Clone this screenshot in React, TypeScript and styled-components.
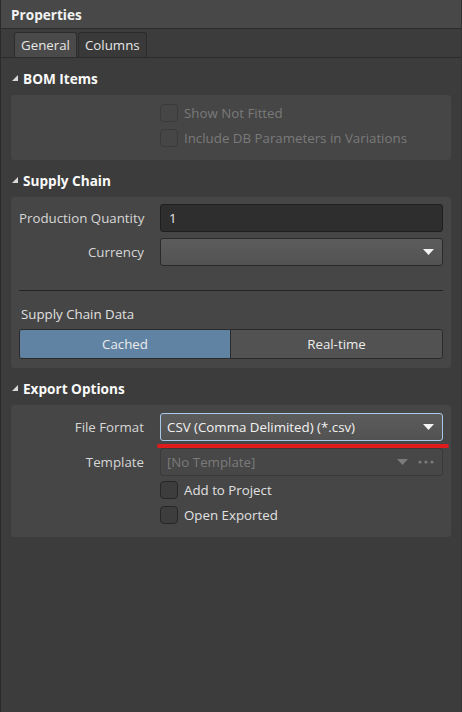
import React from "react";
import styled, { createGlobalStyle } from "styled-components";

const Global = createGlobalStyle`
  html, body { margin: 0; padding: 0; background: #3c3c3c; }
  body { font-family: "Open Sans", "Noto Sans", sans-serif; }
  * { box-sizing: border-box; }
`;

const Panel = styled.div`
  width: 462px;
  height: 712px;
  background: #3c3c3c;
  border-left: 1px solid #2a2a2a;
  border-right: 1px solid #333;
  display: flex;
  flex-direction: column;
  font-size: 13.3px;
  color: #dcdcdc;
`;

const TitleBar = styled.div`
  height: 29px;
  flex: none;
  background: #484848;
  border-bottom: 1px solid #2b2b2b;
  display: flex;
  align-items: center;
  padding-left: 10px;
  font-weight: 700;
  font-size: 13.6px;
  color: #f2f2f2;
`;

const TabBar = styled.div`
  height: 29px;
  flex: none;
  display: flex;
  align-items: flex-end;
  padding-left: 13px;
  border-bottom: 1px solid #2b2b2b;
  background: #3c3c3c;
`;

const Tab = styled.div<{ $active?: boolean }>`
  height: 25px;
  padding: 0 6px;
  display: flex;
  align-items: center;
  border: 1px solid #2c2c2c;
  border-bottom: none;
  border-radius: 3px 3px 0 0;
  background: ${(p) => (p.$active ? "#4a4a4a" : "#393939")};
  color: #e6e6e6;
  margin-right: 1px;
`;

const Body = styled.div`
  padding: 0 10px;
  display: flex;
  flex-direction: column;
`;

const SectionHeader = styled.div`
  height: 28px;
  margin-top: 6px;
  margin-bottom: 3px;
  display: flex;
  align-items: center;
  gap: 5px;
  font-weight: 700;
  font-size: 13.6px;
  color: #fafafa;
  padding-left: 1px;
`;

const Card = styled.div<{ $pt: number; $pb: number }>`
  background: #464646;
  border-radius: 3px;
  padding: ${(p) => p.$pt}px 8px ${(p) => p.$pb}px 8px;
  display: flex;
  flex-direction: column;
`;

const FormGrid = styled.div<{ $gap: number }>`
  display: grid;
  grid-template-columns: 125px 1fr;
  column-gap: 16px;
  row-gap: ${(p) => p.$gap}px;
  align-items: center;
`;

const Label = styled.div`
  text-align: right;
  color: #d6d6d6;
  white-space: nowrap;
`;

const Input = styled.div`
  height: 28px;
  background: #2e2e2e;
  border: 1px solid #1f1f1f;
  border-radius: 3px;
  display: flex;
  align-items: center;
  padding-left: 8px;
  color: #e6e6e6;
`;

const Select = styled.div<{ $focus?: boolean; $disabled?: boolean }>`
  position: relative;
  height: 28px;
  border-radius: 3px;
  border: 1px solid ${(p) => (p.$focus ? "#a6c8ea" : p.$disabled ? "#3a3a3a" : "#2a2a2a")};
  background: ${(p) =>
    p.$disabled ? "#474747" : "linear-gradient(#5c5c5c, #525252)"};
  display: flex;
  align-items: center;
  padding: 0 8px 0 6px;
  gap: 10px;
  color: ${(p) => (p.$disabled ? "#7b7b7b" : "#f2f2f2")};
`;

const SelectText = styled.span`
  flex: 1;
  white-space: nowrap;
`;

const Underline = styled.div`
  position: absolute;
  left: -4px;
  right: -7px;
  bottom: -8px;
  height: 4px;
  border-radius: 2px;
  background: #e01b1b;
`;

const Divider = styled.div`
  height: 1px;
  background: #242424;
  margin-top: 24px;
`;

const SubLabel = styled.div`
  margin-top: 14px;
  color: #e0e0e0;
  height: 18px;
  line-height: 18px;
  padding-left: 2px;
`;

const Segmented = styled.div`
  margin-top: 6px;
  display: grid;
  grid-template-columns: 1fr 1fr;
  height: 30px;
  border: 1px solid #2a2a2a;
  border-radius: 3px;
  overflow: hidden;
`;

const Segment = styled.div<{ $active?: boolean }>`
  display: flex;
  align-items: center;
  justify-content: center;
  background: ${(p) => (p.$active ? "#6183a3" : "#525252")};
  color: #ececec;
  border-right: ${(p) => (p.$active ? "1px solid #2a2a2a" : "none")};
`;

const CheckGroup = styled.div<{ $offset?: number }>`
  margin-top: ${(p) => p.$offset ?? 0}px;
`;

const CheckRow = styled.div<{ $disabled?: boolean }>`
  height: 25px;
  display: flex;
  align-items: center;
  gap: 6px;
  color: ${(p) => (p.$disabled ? "#7a7a7a" : "#e0e0e0")};
`;

const Box = styled.span<{ $disabled?: boolean }>`
  width: 18px;
  height: 18px;
  border-radius: 4px;
  border: 1px solid ${(p) => (p.$disabled ? "#3a3a3a" : "#262626")};
  background: ${(p) => (p.$disabled ? "#464646" : "#3d3d3d")};
`;

const Tri = () => (
  <svg width="6" height="6" viewBox="0 0 6 6">
    <polygon points="6,0 6,6 0,6" fill="#d8d8d8" />
  </svg>
);

const Caret = ({ color = "#f4f4f4" }: { color?: string }) => (
  <svg width="11" height="6" viewBox="0 0 11 6">
    <polygon points="0,0 11,0 5.5,6" fill={color} />
  </svg>
);

const Dots = () => (
  <svg width="16" height="4" viewBox="0 0 16 4">
    <circle cx="2" cy="2" r="1.6" fill="#7b7b7b" />
    <circle cx="8" cy="2" r="1.6" fill="#7b7b7b" />
    <circle cx="14" cy="2" r="1.6" fill="#7b7b7b" />
  </svg>
);

export default function App() {
  return (
    <>
      <Global />
      <Panel>
        <TitleBar>Properties</TitleBar>
        <TabBar>
          <Tab $active>General</Tab>
          <Tab>Columns</Tab>
        </TabBar>
        <Body>
          <SectionHeader>
            <Tri />
            BOM Items
          </SectionHeader>
          <Card $pt={5} $pb={10}>
            <FormGrid $gap={6}>
              <span />
              <CheckGroup>
                <CheckRow $disabled>
                  <Box $disabled />
                  Show Not Fitted
                </CheckRow>
                <CheckRow $disabled>
                  <Box $disabled />
                  Include DB Parameters in Variations
                </CheckRow>
              </CheckGroup>
            </FormGrid>
          </Card>

          <SectionHeader>
            <Tri />
            Supply Chain
          </SectionHeader>
          <Card $pt={7} $pb={9}>
            <FormGrid $gap={6}>
              <Label>Production Quantity</Label>
              <Input>1</Input>
              <Label>Currency</Label>
              <Select>
                <SelectText />
                <Caret />
              </Select>
            </FormGrid>
            <Divider />
            <SubLabel>Supply Chain Data</SubLabel>
            <Segmented>
              <Segment $active>Cached</Segment>
              <Segment>Real-time</Segment>
            </Segmented>
          </Card>

          <SectionHeader>
            <Tri />
            Export Options
          </SectionHeader>
          <Card $pt={8} $pb={10}>
            <FormGrid $gap={7}>
              <Label>File Format</Label>
              <Select $focus>
                <SelectText>CSV (Comma Delimited) (*.csv)</SelectText>
                <Caret />
                <Underline />
              </Select>
              <Label>Template</Label>
              <Select $disabled>
                <SelectText>[No Template]</SelectText>
                <Caret color="#7b7b7b" />
                <Dots />
              </Select>
              <span />
              <CheckGroup $offset={-6}>
                <CheckRow>
                  <Box />
                  Add to Project
                </CheckRow>
                <CheckRow>
                  <Box />
                  Open Exported
                </CheckRow>
              </CheckGroup>
            </FormGrid>
          </Card>
        </Body>
      </Panel>
    </>
  );
}
